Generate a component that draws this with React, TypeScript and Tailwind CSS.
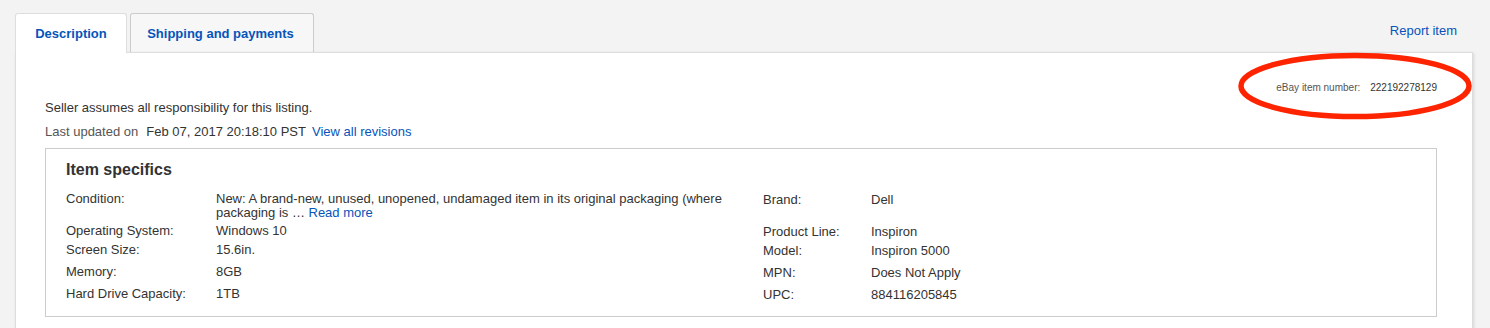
const rows = [
  {
    l1: "Condition:",
    v1: (
      <>
        New: A brand-new, unused, unopened, undamaged item in its original packaging (where
        <br />
        packaging is … <a className="text-[#0654ba]">Read more</a>
      </>
    ),
    l2: "Brand:",
    v2: "Dell",
    h: "h-[32px]",
  },
  { l1: "Operating System:", v1: "Windows 10", l2: "Product Line:", v2: "Inspiron", h: "h-[19px]" },
  { l1: "Screen Size:", v1: "15.6in.", l2: "Model:", v2: "Inspiron 5000", h: "h-[22px]" },
  { l1: "Memory:", v1: "8GB", l2: "MPN:", v2: "Does Not Apply", h: "h-[22px]" },
  { l1: "Hard Drive Capacity:", v1: "1TB", l2: "UPC:", v2: "884116205845", h: "h-[15px]" },
];

const App = () => {
  return (
    <div className="w-full h-[328px] overflow-hidden bg-[#f3f3f3] pt-[13px] pl-[15px] pr-[17px] font-['Liberation_Sans',Arial,sans-serif] text-[#333]">
      <div className="flex items-end justify-between">
        <div className="flex items-end gap-[3px]">
          <div className="relative z-10 -mb-px flex h-[40px] w-[112px] items-center justify-center rounded-t-[3px] border border-b-0 border-[#ddd] bg-white pt-px text-[13px] font-bold text-[#0654ba]">
            Description
          </div>
          <div className="flex h-[39px] w-[184px] items-center justify-center rounded-t-[3px] border border-b-0 border-[#ccc] bg-[#f7f7f7] pt-[2px] pr-[3px] text-[13px] font-bold text-[#0654ba]">
            Shipping and payments
          </div>
        </div>
        <a className="mb-[13px] mr-[16px] text-[13px] leading-[16px] text-[#0654ba]">Report item</a>
      </div>

      <div className="relative h-[300px] border border-[#ddd] bg-white pl-[29px] pr-[35px] pt-[29px] shadow-[1px_1px_3px_rgba(0,0,0,0.12)]">
        <svg
          className="absolute left-[1221px] top-[-2px]"
          width="240"
          height="70"
          viewBox="0 0 240 70"
        >
          <ellipse cx="118" cy="35" rx="114" ry="30.5" fill="none" stroke="#ff2400" strokeWidth="5.5" />
        </svg>

        <div className="flex justify-end text-[10px] leading-[12px]">
          <span className="text-[#555]">eBay item number:</span>
          <span className="ml-[10px] text-[#333]">222192278129</span>
        </div>

        <p className="mt-[6px] text-[13px] leading-[16px]">Seller assumes all responsibility for this listing.</p>
        <p className="mt-[8px] text-[13px] leading-[16px]">
          <span className="text-[#555]">Last updated on</span>
          <span className="ml-[8px]">Feb 07, 2017 20:18:10 PST</span>
          <a className="ml-[6px] text-[#0654ba]">View all revisions</a>
        </p>

        <div className="mt-[8px] border border-[#ccc] pl-[20px] pt-[11px] pb-[15px]">
          <h2 className="text-[16px] font-bold leading-[20px] text-[#333]">Item specifics</h2>
          <div className="mt-[11px] flex flex-col text-[13px] leading-[14px]">
            {rows.map((r) => (
              <div key={r.l1} className={`grid grid-cols-[150px_547px_108px_1fr] ${r.h}`}>
                <span className="pt-px">{r.l1}</span>
                <span className="pt-px">{r.v1}</span>
                <span className="pt-[2px]">{r.l2}</span>
                <span className="pt-[2px]">{r.v2}</span>
              </div>
            ))}
          </div>
        </div>
      </div>
    </div>
  );
};

export default App;
